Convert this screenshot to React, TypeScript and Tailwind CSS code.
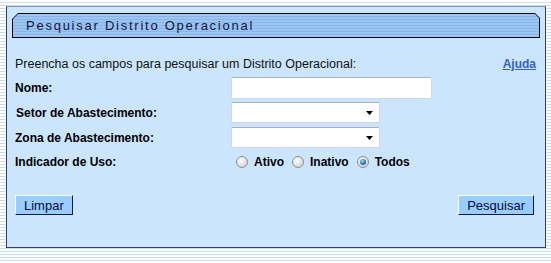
import { useState } from "react";

const Radio = ({ checked, label, onClick }: { checked: boolean; label: string; onClick: () => void }) => (
  <label className="flex items-center cursor-pointer" onClick={onClick}>
    <span className="w-[12px] h-[12px] rounded-full border border-[#8e8f8f] bg-[radial-gradient(circle_at_40%_35%,#ffffff_0%,#e6e6e6_45%,#c4c4c4_100%)] flex items-center justify-center">
      {checked && (
        <span className="w-[6px] h-[6px] rounded-full bg-[radial-gradient(circle_at_40%_35%,#9fe0ff_0%,#1b7fc4_55%,#0a3f7a_100%)]" />
      )}
    </span>
    <span className="ml-[6px] font-bold">{label}</span>
  </label>
);

const SelectBox = () => (
  <div className="w-[149px] h-[21px] bg-white border border-[#cfd8e0] border-t-[#a9b0b8] rounded-[2px] flex items-center justify-end pr-[6px]">
    <svg width="7" height="4" viewBox="0 0 7 4">
      <path d="M0 0 H7 L3.5 4 Z" fill="#000" />
    </svg>
  </div>
);

const App = () => {
  const [uso, setUso] = useState("todos");

  return (
    <div className="w-[551px] h-[263px] p-[6px] bg-[repeating-linear-gradient(to_bottom,#ffffff_0px,#ffffff_2px,#c9ddef_2px,#c9ddef_3px)] font-['Liberation_Sans',Arial,sans-serif] text-[12px] text-black">
      <div className="w-[540px] h-[242px] bg-[#cbe5fe] border border-[#2f4257] border-t-[#7d98b3] px-[5px] pt-[6px]">
        {/* Header tab */}
        <div className="h-[25px] w-[528px] bg-black [clip-path:polygon(6px_0,calc(100%-5px)_0,100%_5px,100%_100%,0_100%,0_6px)] p-[1px]">
          <div className="h-full w-full [clip-path:polygon(5px_0,calc(100%-4px)_0,100%_4px,100%_100%,0_100%,0_5px)] bg-[repeating-linear-gradient(to_bottom,#9cc6f2_0px,#9cc6f2_2px,#86b6ec_2px,#86b6ec_3px)] flex items-center pl-[13px]">
            <span className="text-[13px] tracking-[1.75px] text-[#15153a]">Pesquisar Distrito Operacional</span>
          </div>
        </div>

        <div className="pl-[3px] pr-[6px]">
          <div className="flex justify-between items-center mt-[19px] h-[14px]">
            <span className="text-[12.5px] text-[#111]">Preencha os campos para pesquisar um Distrito Operacional:</span>
            <a href="#" className="font-bold text-[#3163c6] underline -mr-[2px]">Ajuda</a>
          </div>

          <div className="flex items-center mt-[6px] h-[22px]">
            <span className="w-[216px] font-bold">Nome:</span>
            <input className="w-[201px] h-[22px] bg-white border border-[#cfd8e0] border-t-[#a9b0b8] rounded-[2px] outline-none" />
          </div>

          <div className="flex items-center mt-[3px] h-[21px]">
            <span className="w-[216px] font-bold pl-[1px]">Setor de Abastecimento:</span>
            <SelectBox />
          </div>

          <div className="flex items-center mt-[4px] h-[21px]">
            <span className="w-[216px] font-bold">Zona de Abastecimento:</span>
            <SelectBox />
          </div>

          <div className="flex items-center mt-[4px] h-[20px]">
            <span className="w-[221px] font-bold">Indicador de Uso:</span>
            <div className="flex items-center gap-[8px]">
              <Radio checked={uso === "ativo"} label="Ativo" onClick={() => setUso("ativo")} />
              <Radio checked={uso === "inativo"} label="Inativo" onClick={() => setUso("inativo")} />
              <Radio checked={uso === "todos"} label="Todos" onClick={() => setUso("todos")} />
            </div>
          </div>

          <div className="flex justify-between mt-[23px]">
            <button className="h-[20px] px-[8px] bg-[#99ccff] border border-white border-r-[#0a1a40] border-b-[#0a1a40] text-[13px] text-[#0c0c35] leading-none">
              Limpar
            </button>
            <button className="h-[20px] px-[8px] bg-[#99ccff] border border-white border-r-[#0a1a40] border-b-[#0a1a40] text-[13px] text-[#0c0c35] leading-none">
              Pesquisar
            </button>
          </div>
        </div>
      </div>
    </div>
  );
};

export default App;
